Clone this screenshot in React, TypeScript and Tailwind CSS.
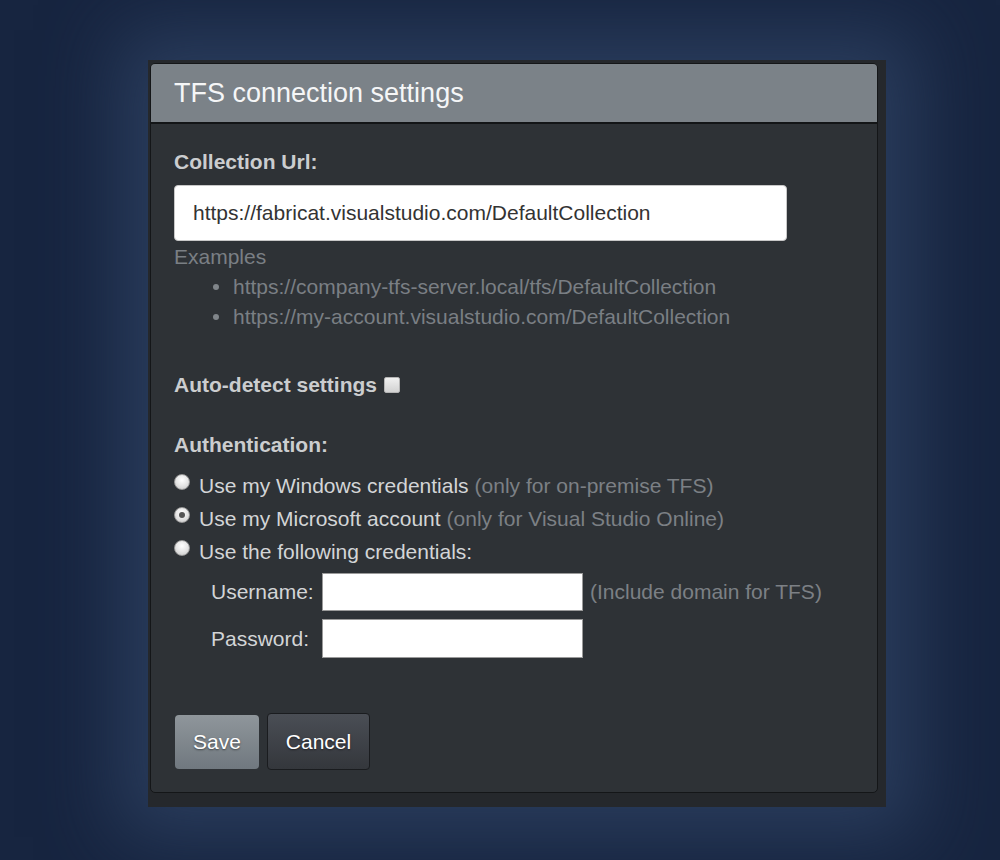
import React from "react";

function Radio({ checked }: { checked?: boolean }) {
  return (
    <span className="relative inline-block w-[16px] h-[16px] rounded-full border border-[#9a9a9a] bg-[radial-gradient(circle_at_50%_35%,#ffffff_0%,#e6e6e6_50%,#c4c4c4_100%)] shrink-0">
      {checked && (
        <span className="absolute left-1/2 top-1/2 -translate-x-1/2 -translate-y-1/2 w-[6px] h-[6px] rounded-full bg-[#555]" />
      )}
    </span>
  );
}

export default function App() {
  return (
    <div
      className="w-full h-[860px] bg-[#172540] flex pl-[148px] pt-[60px]"
      style={{ fontFamily: '"Liberation Sans", Arial, sans-serif' }}
    >
      <div className="w-[738px] h-[747px] bg-[#25282c] pl-[2px] pt-[3px] pr-[8px] pb-[14px] shadow-[0_0_70px_30px_rgba(48,68,102,0.75)]">
        <div className="w-[728px] h-[730px] border border-[#141618] rounded-[5px] bg-[#2e3236] overflow-hidden flex flex-col">
          <div className="h-[60px] shrink-0 bg-[#7b8288] border-b-2 border-[#131517] px-[23px] flex items-center">
            <span className="text-[27px] text-[#f5f6f7] leading-none pt-[1px]">TFS connection settings</span>
          </div>
          <div className="px-[23px] pt-[23px] flex flex-col text-[21px]">
            <div className="h-[30px] leading-[30px] font-bold text-[#cbcdcf]">Collection Url:</div>
            <div className="mt-[8px] w-[613px] h-[56px] bg-white rounded-[4px] border border-[#c8c8c8] flex items-center pl-[18px] text-[#333]">
              https://fabricat.visualstudio.com/DefaultCollection
            </div>
            <div className="mt-[1px] h-[30px] leading-[30px] text-[#7a7f84]">Examples</div>
            <ul className="text-[#7a7f84]">
              <li className="h-[30px] leading-[30px] flex items-center">
                <span className="w-[6px] h-[6px] rounded-full bg-[#80858a] ml-[39px] mr-[14px]" />
                https://company-tfs-server.local/tfs/DefaultCollection
              </li>
              <li className="h-[30px] leading-[30px] flex items-center">
                <span className="w-[6px] h-[6px] rounded-full bg-[#80858a] ml-[39px] mr-[14px]" />
                https://my-account.visualstudio.com/DefaultCollection
              </li>
            </ul>
            <div className="mt-[38px] h-[30px] flex items-center font-bold text-[#cbcdcf]">
              Auto-detect settings
              <span className="ml-[7px] inline-block w-[16px] h-[16px] rounded-[2px] border border-[#b5b5b5] bg-[linear-gradient(#f0f0f0,#d2d2d2)]" />
            </div>
            <div className="mt-[30px] h-[30px] leading-[30px] font-bold text-[#cbcdcf]">Authentication:</div>
            <div className="mt-[9px] flex flex-col text-[#d3d5d7]">
              <div className="h-[33px] flex items-center">
                <span className="-mt-[6px]"><Radio /></span>
                <span className="ml-[9px]">Use my Windows credentials</span>
                <span className="ml-[6px] text-[#7c8085]">(only for on-premise TFS)</span>
              </div>
              <div className="h-[33px] flex items-center">
                <span className="-mt-[6px]"><Radio checked /></span>
                <span className="ml-[9px]">Use my Microsoft account</span>
                <span className="ml-[6px] text-[#7c8085]">(only for Visual Studio Online)</span>
              </div>
              <div className="h-[33px] flex items-center">
                <span className="-mt-[6px]"><Radio /></span>
                <span className="ml-[9px]">Use the following credentials:</span>
              </div>
            </div>
            <div className="mt-[5px] pl-[37px] flex flex-col gap-[8px] text-[#d3d5d7]">
              <div className="flex items-center h-[38px]">
                <span className="w-[111px]">Username:</span>
                <span className="w-[261px] h-[38px] bg-white border border-[#9a9a9a]" />
                <span className="ml-[7px] text-[#7c8085]">(Include domain for TFS)</span>
              </div>
              <div className="flex items-center h-[39px]">
                <span className="w-[111px]">Password:</span>
                <span className="w-[261px] h-[39px] bg-white border border-[#9a9a9a]" />
              </div>
            </div>
            <div className="mt-[55px] flex items-center gap-[8px] text-[21px]">
              <button className="ml-[1px] w-[84px] h-[54px] rounded-[4px] bg-[linear-gradient(#8f969b,#70787f)] text-white [text-shadow:0_1px_2px_rgba(0,0,0,0.5)]">
                Save
              </button>
              <button className="w-[103px] h-[57px] rounded-[4px] border border-[#1a1c1f] bg-[linear-gradient(#4a4e55,#34373c)] text-white [text-shadow:0_1px_2px_rgba(0,0,0,0.5)]">
                Cancel
              </button>
            </div>
          </div>
        </div>
      </div>
    </div>
  );
}
